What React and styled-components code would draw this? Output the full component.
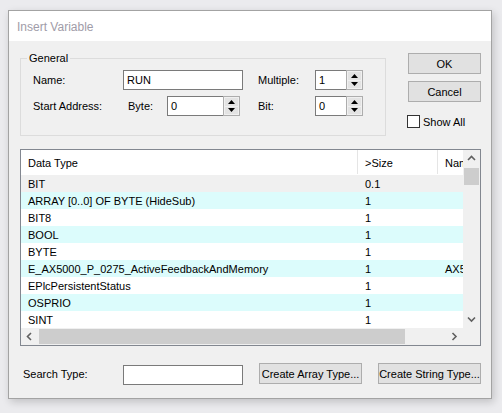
import React from "react";
import styled, { createGlobalStyle } from "styled-components";

const GlobalStyle = createGlobalStyle`
  html, body {
    margin: 0;
    padding: 0;
    background: #ebebee;
    font-family: "Liberation Sans", Arial, sans-serif;
    font-size: 11px;
    color: #000;
  }
  * {
    box-sizing: border-box;
  }
`;

const Page = styled.div`
  width: 502px;
  height: 413px;
  padding: 10px 0 0 8px;
`;

const Dialog = styled.div`
  width: 484px;
  height: 389px;
  border: 1px solid #a3a3a3;
  background: #f0f0f0;
  box-shadow: 2px 3px 8px rgba(0, 0, 0, 0.18);
  display: flex;
  flex-direction: column;
`;

const TitleBar = styled.div`
  height: 30px;
  flex: none;
  background: #fff;
  color: #a09ca8;
  font-size: 12px;
  display: flex;
  align-items: center;
  padding: 1px 0 0 8px;
`;

const Body = styled.div`
  flex: 1;
  display: flex;
  flex-direction: column;
  padding: 11px 0 0 11px;
`;

const TopArea = styled.div`
  display: flex;
  align-items: flex-start;
  gap: 22px;
`;

const GroupBox = styled.fieldset`
  width: 366px;
  margin: 0;
  padding: 5px 0 19px 12px;
  border: 1px solid #dcdcdc;
  min-inline-size: 0;
`;

const Legend = styled.legend`
  margin-left: -6px;
  padding: 0 2px;
  line-height: 13px;
`;

const FieldGrid = styled.div`
  display: grid;
  grid-template-columns: 90px 120px 15px 57px 48px;
  grid-auto-rows: 20px;
  row-gap: 6px;
  align-items: center;
`;

const Label = styled.span`
  white-space: nowrap;
  grid-column: ${(p) => p.col || "auto"};
`;

const TextBox = styled.div`
  height: 20px;
  width: ${(p) => p.w || "100%"};
  border: 1px solid #7a7a7a;
  background: #fff;
  padding-left: 3px;
  display: flex;
  align-items: center;
`;

const AddressCell = styled.div`
  display: grid;
  grid-template-columns: 44px 73px;
  align-items: center;
  span {
    padding-left: 5px;
  }
`;

const SpinBox = styled.div`
  display: flex;
  height: 20px;
  width: 100%;
`;

const SpinField = styled.div`
  flex: 1;
  border: 1px solid #7a7a7a;
  border-right: none;
  background: #fff;
  padding-left: 3px;
  display: flex;
  align-items: center;
`;

const SpinButtons = styled.div`
  width: 17px;
  border: 1px solid #adadad;
  background: #f0f0f0;
  display: flex;
  flex-direction: column;
  padding: 1px;
  gap: 1px;
`;

const SpinHalf = styled.div`
  flex: 1;
  background: #e3e3e3;
  display: flex;
  align-items: center;
  justify-content: center;
`;

const ButtonColumn = styled.div`
  margin-top: 1px;
  display: flex;
  flex-direction: column;
  width: 73px;
`;

const PushButton = styled.div`
  height: ${(p) => p.h || 21}px;
  width: ${(p) => p.w || 73}px;
  border: 1px solid #adadad;
  background: #e1e1e1;
  display: flex;
  align-items: center;
  justify-content: center;
  white-space: nowrap;
  margin-bottom: ${(p) => p.mb || 0}px;
`;

const CheckRow = styled.div`
  display: flex;
  align-items: center;
  gap: 3px;
  margin-left: -1px;
  margin-top: 13px;
`;

const CheckBox = styled.div`
  width: 13px;
  height: 13px;
  border: 1px solid #333;
  background: #fff;
`;

const ListView = styled.div`
  margin-top: 13px;
  width: 461px;
  height: 197px;
  border: 1px solid #828790;
  background: #fff;
  display: grid;
  grid-template-columns: 442px 17px;
  grid-template-rows: 178px 17px;
`;

const ListContent = styled.div`
  overflow: hidden;
  display: flex;
  flex-direction: column;
`;

const columns = "337px 80px 100px";

const HeaderRow = styled.div`
  height: 25px;
  flex: none;
  display: grid;
  grid-template-columns: ${columns};
  align-items: stretch;
`;

const HeaderCell = styled.div`
  padding: 1px 0 0 7px;
  display: flex;
  align-items: center;
  white-space: nowrap;
  overflow: hidden;
  border-right: ${(p) => (p.last ? "none" : "1px solid #e5e5e5")};
  margin-bottom: 1px;
`;

const DataRow = styled.div`
  height: 17px;
  flex: none;
  display: grid;
  grid-template-columns: ${columns};
  align-items: center;
  background: ${(p) =>
    p.selected ? "#f0f0f0" : p.alt ? "#dcfcfc" : "#fff"};
`;

const Cell = styled.div`
  padding-left: 7px;
  white-space: nowrap;
  overflow: hidden;
  padding-top: 1px;
`;

const VScroll = styled.div`
  background: #f0f0f0;
  display: flex;
  flex-direction: column;
`;

const HScroll = styled.div`
  background: #f0f0f0;
  display: flex;
  align-items: center;
`;

const ArrowBox = styled.div`
  width: 17px;
  height: 17px;
  flex: none;
  display: flex;
  align-items: center;
  justify-content: center;
`;

const Thumb = styled.div`
  background: #cdcdcd;
  width: ${(p) => p.w};
  height: ${(p) => p.h};
  margin: ${(p) => p.m || 0};
  flex: none;
`;

const Track = styled.div`
  flex: 1;
`;

const Corner = styled.div`
  background: #f0f0f0;
`;

const SearchRow = styled.div`
  margin-top: 17px;
  padding-left: 3px;
  display: grid;
  grid-template-columns: 100px 136px 119px 103px;
  align-items: start;
`;

const SearchLabel = styled.span`
  margin-top: 5px;
`;

const SearchBox = styled(TextBox)`
  margin-top: 2px;
  width: 120px;
`;

const Chevron = ({ dir }) => {
  const paths = {
    up: "M1 5 L4.5 1.5 L8 5",
    down: "M1 1.5 L4.5 5 L8 1.5",
    left: "M5 1 L1.5 4.5 L5 8",
    right: "M1.5 1 L5 4.5 L1.5 8",
  };
  const vertical = dir === "up" || dir === "down";
  return (
    <svg width={vertical ? 9 : 7} height={vertical ? 7 : 9} viewBox={vertical ? "0 0 9 7" : "0 0 7 9"}>
      <path d={paths[dir]} fill="none" stroke="#606060" strokeWidth="1.6" />
    </svg>
  );
};

const Triangle = ({ up }) => (
  <svg width="7" height="4" viewBox="0 0 7 4">
    <path d={up ? "M0 4 L3.5 0 L7 4 Z" : "M0 0 L7 0 L3.5 4 Z"} fill="#000" />
  </svg>
);

const Spin = ({ value }) => (
  <SpinBox>
    <SpinField>{value}</SpinField>
    <SpinButtons>
      <SpinHalf>
        <Triangle up />
      </SpinHalf>
      <SpinHalf>
        <Triangle />
      </SpinHalf>
    </SpinButtons>
  </SpinBox>
);

const types = [
  { name: "BIT", size: "0.1", ns: "" },
  { name: "ARRAY [0..0] OF BYTE (HideSub)", size: "1", ns: "" },
  { name: "BIT8", size: "1", ns: "" },
  { name: "BOOL", size: "1", ns: "" },
  { name: "BYTE", size: "1", ns: "" },
  { name: "E_AX5000_P_0275_ActiveFeedbackAndMemory", size: "1", ns: "AX5000" },
  { name: "EPlcPersistentStatus", size: "1", ns: "" },
  { name: "OSPRIO", size: "1", ns: "" },
  { name: "SINT", size: "1", ns: "" },
];

export default function App() {
  return (
    <Page>
      <GlobalStyle />
      <Dialog>
        <TitleBar>Insert Variable</TitleBar>
        <Body>
          <TopArea>
            <GroupBox>
              <Legend>General</Legend>
              <FieldGrid>
                <Label>Name:</Label>
                <TextBox>RUN</TextBox>
                <Label col="4">Multiple:</Label>
                <Spin value="1" />
                <Label>Start Address:</Label>
                <AddressCell>
                  <span>Byte:</span>
                  <Spin value="0" />
                </AddressCell>
                <Label col="4">Bit:</Label>
                <Spin value="0" />
              </FieldGrid>
            </GroupBox>
            <ButtonColumn>
              <PushButton mb={7}>OK</PushButton>
              <PushButton>Cancel</PushButton>
              <CheckRow>
                <CheckBox />
                <span>Show All</span>
              </CheckRow>
            </ButtonColumn>
          </TopArea>

          <ListView>
            <ListContent>
              <HeaderRow>
                <HeaderCell>Data Type</HeaderCell>
                <HeaderCell>&gt;Size</HeaderCell>
                <HeaderCell last>Namespace</HeaderCell>
              </HeaderRow>
              {types.map((t, i) => (
                <DataRow key={t.name} selected={i === 0} alt={i % 2 === 1}>
                  <Cell>{t.name}</Cell>
                  <Cell>{t.size}</Cell>
                  <Cell>{t.ns}</Cell>
                </DataRow>
              ))}
            </ListContent>
            <VScroll>
              <ArrowBox>
                <Chevron dir="up" />
              </ArrowBox>
              <Thumb w="15px" h="17px" m="1px 0 0 1px" />
              <Track />
              <ArrowBox>
                <Chevron dir="down" />
              </ArrowBox>
            </VScroll>
            <HScroll>
              <ArrowBox>
                <Chevron dir="left" />
              </ArrowBox>
              <Thumb w="366px" h="15px" m="0 0 0 1px" />
              <Track />
              <ArrowBox>
                <Chevron dir="right" />
              </ArrowBox>
            </HScroll>
            <Corner />
          </ListView>

          <SearchRow>
            <SearchLabel>Search Type:</SearchLabel>
            <SearchBox />
            <PushButton w={103}>Create Array Type...</PushButton>
            <PushButton w={103}>Create String Type...</PushButton>
          </SearchRow>
        </Body>
      </Dialog>
    </Page>
  );
}
